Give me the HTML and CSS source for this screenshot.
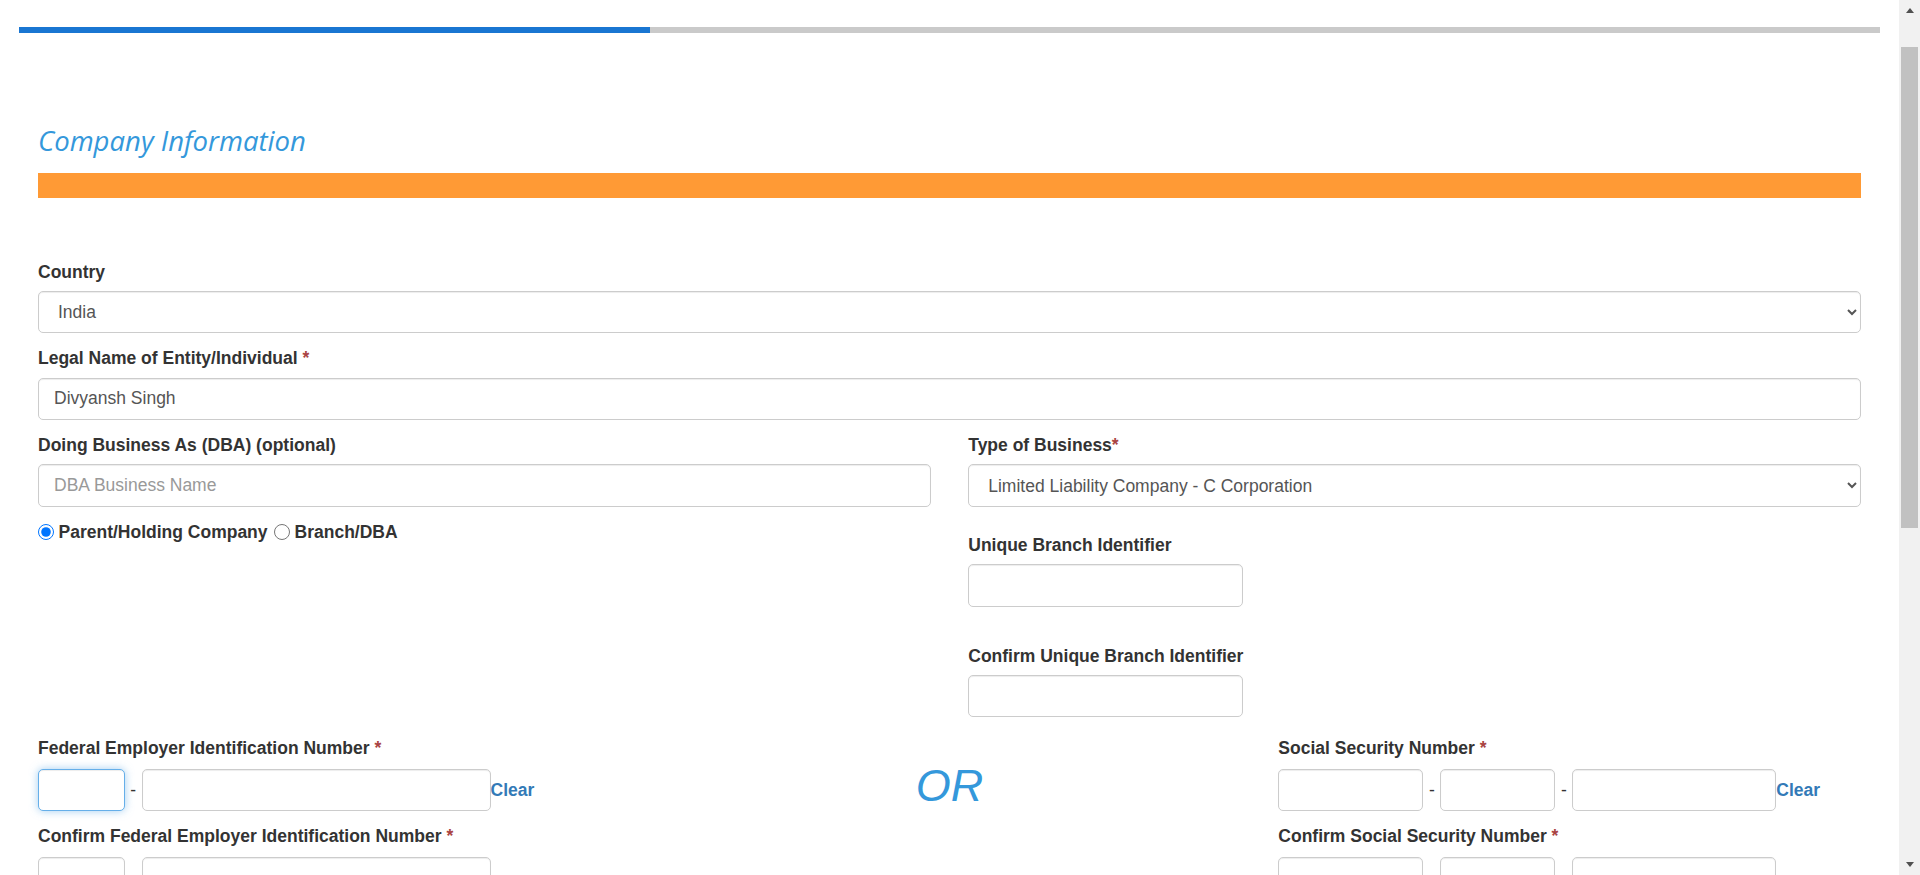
FILE: index.html
```html
<!DOCTYPE html>
<html lang="en">
<head>
<meta charset="utf-8">
<title>Company Information</title>
<link rel="stylesheet" href="styles.css">
</head>
<body>
<div class="viewport">
  <div class="main">
    <div class="progress"><div class="progress-fill"></div></div>
    <div class="form">
      <h2 class="title">Company Information</h2>
      <div class="title-bar"></div>

      <div class="group group-first">
        <label class="lbl">Country</label>
        <select class="ctl">
          <option>India</option>
        </select>
      </div>

      <div class="group">
        <label class="lbl">Legal Name of Entity/Individual <span class="req">*</span></label>
        <input class="ctl" type="text" value="Divyansh Singh">
      </div>

      <div class="cols">
        <div class="col">
          <div class="group">
            <label class="lbl">Doing Business As (DBA) (optional)</label>
            <input class="ctl" type="text" placeholder="DBA Business Name">
          </div>
          <div class="radios">
            <label class="radio"><input type="radio" name="kind" checked> Parent/Holding Company</label>
            <label class="radio"><input type="radio" name="kind"> Branch/DBA</label>
          </div>
        </div>
        <div class="col">
          <div class="group">
            <label class="lbl">Type of Business<span class="req">*</span></label>
            <select class="ctl">
              <option>Limited Liability Company - C Corporation</option>
            </select>
          </div>
          <div class="group group-branch">
            <label class="lbl">Unique Branch Identifier</label>
            <input class="ctl ctl-branch" type="text">
          </div>
          <div class="group group-confirm-branch">
            <label class="lbl">Confirm Unique Branch Identifier</label>
            <input class="ctl ctl-branch" type="text">
          </div>
        </div>
      </div>

      <div class="tax">
        <div class="tax-col">
          <div class="group">
            <label class="lbl lbl-split">Federal Employer Identification Number <span class="req">*</span></label>
            <div class="split">
              <input class="ctl w-fein1 focus" type="text"><span class="dash">-</span><input class="ctl w-fein2" type="text"><a class="clear" href="#">Clear</a>
            </div>
          </div>
          <div class="group">
            <label class="lbl lbl-split">Confirm Federal Employer Identification Number <span class="req">*</span></label>
            <div class="split">
              <input class="ctl w-fein1" type="text"><span class="dash">-</span><input class="ctl w-fein2" type="text">
            </div>
          </div>
        </div>
        <div class="tax-or">
          <span class="or">OR</span>
        </div>
        <div class="tax-col">
          <div class="group">
            <label class="lbl lbl-split">Social Security Number <span class="req">*</span></label>
            <div class="split">
              <input class="ctl w-ssn1" type="text"><span class="dash dash-ssn">-</span><input class="ctl w-ssn2" type="text"><span class="dash dash-ssn">-</span><input class="ctl w-ssn3" type="text"><a class="clear" href="#">Clear</a>
            </div>
          </div>
          <div class="group">
            <label class="lbl lbl-split">Confirm Social Security Number <span class="req">*</span></label>
            <div class="split">
              <input class="ctl w-ssn1" type="text"><span class="dash dash-ssn">-</span><input class="ctl w-ssn2" type="text"><span class="dash dash-ssn">-</span><input class="ctl w-ssn3" type="text">
            </div>
          </div>
        </div>
      </div>
    </div>
  </div>
  <div class="scrollbar">
    <div class="sb-btn"><span class="arrow-up"></span></div>
    <div class="sb-track"><div class="sb-thumb"></div></div>
    <div class="sb-btn"><span class="arrow-down"></span></div>
  </div>
</div>
</body>
</html>
```

FILE: styles.css
```css
* { box-sizing: border-box; }

html, body {
  margin: 0;
  padding: 0;
  background: #fff;
}

body {
  font-family: "Liberation Sans", Arial, sans-serif;
  font-size: 17.5px;
  line-height: 1.42857;
  color: #333;
}

.viewport {
  display: flex;
  height: 875px;
  overflow: hidden;
}

.main {
  flex: 1;
  min-width: 0;
  padding: 27px 19px 0;
  overflow: hidden;
}

.progress {
  height: 6px;
  background: #cacaca;
}

.progress-fill {
  width: 631px;
  height: 100%;
  background: #1976d2;
}

.form {
  padding: 0 19px;
}

.title {
  margin: 93px 0 0;
  font-family: "Open Sans", sans-serif;
  font-style: italic;
  font-weight: 400;
  font-size: 27.5px;
  line-height: 30px;
  color: #3498db;
}

.title-bar {
  margin-top: 17px;
  height: 25px;
  background: #ff9a35;
}

.group {
  margin-bottom: 13px;
}

.group-first {
  margin-top: 61.5px;
}

.lbl {
  display: block;
  font-weight: 700;
  margin-bottom: 6.25px;
  line-height: 25px;
}

.lbl-split {
  margin-bottom: 7.5px;
}

.req {
  color: #a94442;
}

.ctl {
  display: block;
  width: 100%;
  height: 42.5px;
  padding: 7.5px 15px;
  font-family: "Liberation Sans", Arial, sans-serif;
  font-size: 17.5px;
  line-height: 1.42857;
  color: #555;
  background: #fff;
  border: 1.25px solid #ccc;
  border-radius: 5px;
  box-shadow: inset 0 1px 1px rgba(0, 0, 0, .075);
  outline: none;
}

.ctl::placeholder {
  color: #999;
}

select.ctl {
  padding-left: 15px;
}

.focus {
  border-color: #66afe9;
  box-shadow: inset 0 1px 1px rgba(0, 0, 0, .075), 0 0 8px rgba(102, 175, 233, .6);
}

.cols {
  display: grid;
  grid-template-columns: 1fr 1fr;
  column-gap: 37.5px;
}

.radios {
  display: flex;
  align-items: center;
  margin-top: 6px;
  line-height: 25px;
  font-weight: 700;
}

.radio {
  display: flex;
  align-items: center;
  margin-right: 6.5px;
}

.radio input {
  width: 16px;
  height: 16px;
  margin: 0 4.5px 0 0;
}

.group-branch {
  margin-top: 26px;
}

.group-confirm-branch {
  margin-top: 37px;
}

.ctl-branch {
  width: 275px;
}

.tax {
  display: grid;
  grid-template-columns: 1fr 1fr 1fr;
  column-gap: 37.5px;
  margin-top: 6px;
}

.tax-or {
  display: flex;
  justify-content: center;
  padding-top: 25px;
}

.or {
  font-size: 45px;
  font-style: italic;
  line-height: 50px;
  color: #3498db;
}

.split {
  display: flex;
  align-items: center;
}

.split .ctl {
  flex: none;
}

.dash {
  width: 16.5px;
  text-align: center;
  color: #333;
}

.dash-ssn {
  width: 17px;
}

.w-fein1 { width: 87px; }
.w-fein2 { width: 349px; }
.w-ssn1 { width: 145px; }
.w-ssn2 { width: 115px; }
.w-ssn3 { width: 204px; }

.clear {
  font-weight: 700;
  color: #337ab7;
  text-decoration: none;
}

.scrollbar {
  flex: none;
  width: 21px;
  background: #f1f1f1;
  display: flex;
  flex-direction: column;
}

.sb-btn {
  height: 21px;
  display: flex;
  align-items: center;
  justify-content: center;
  flex: none;
}

.sb-track {
  flex: 1;
  padding: 26px 2px 0;
}

.sb-thumb {
  height: 481px;
  background: #c1c1c1;
}

.arrow-up {
  width: 0;
  height: 0;
  border-left: 4.5px solid transparent;
  border-right: 4.5px solid transparent;
  border-bottom: 5px solid #505050;
}

.arrow-down {
  width: 0;
  height: 0;
  border-left: 4.5px solid transparent;
  border-right: 4.5px solid transparent;
  border-top: 5px solid #505050;
}
```
